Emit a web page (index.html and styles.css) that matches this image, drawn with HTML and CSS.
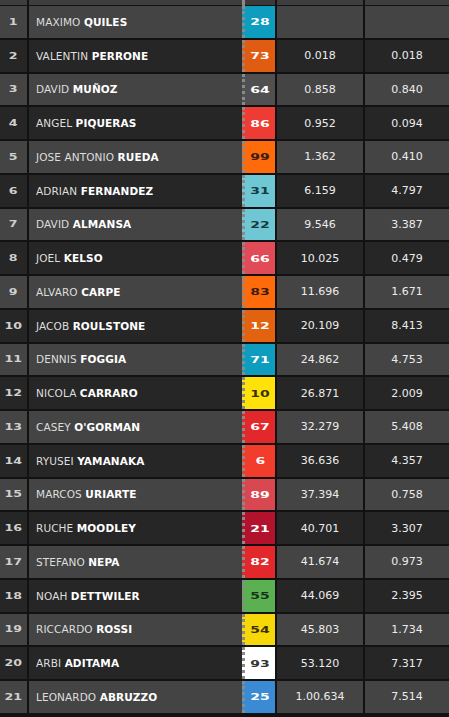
FILE: index.html
```html
<!DOCTYPE html>
<html>
<head>
<meta charset="utf-8">
<link rel="stylesheet" href="styles.css">
</head>
<body>
<div class="table">
  <div class="row stub"><div class="pos"></div><div class="name"></div><div class="num"></div><div class="time"></div><div class="gap"></div></div>
  <div class="row"><div class="pos"><span>1</span></div><div class="name">MAXIMO <b>QUILES</b></div><div class="num c-teal"><span>28</span></div><div class="time"></div><div class="gap"></div></div>
  <div class="row"><div class="pos"><span>2</span></div><div class="name">VALENTIN <b>PERRONE</b></div><div class="num c-orange2"><span>73</span></div><div class="time">0.018</div><div class="gap">0.018</div></div>
  <div class="row"><div class="pos"><span>3</span></div><div class="name">DAVID <b>MUÑOZ</b></div><div class="num c-gray"><span>64</span></div><div class="time">0.858</div><div class="gap">0.840</div></div>
  <div class="row"><div class="pos"><span>4</span></div><div class="name">ANGEL <b>PIQUERAS</b></div><div class="num c-red"><span>86</span></div><div class="time">0.952</div><div class="gap">0.094</div></div>
  <div class="row"><div class="pos"><span>5</span></div><div class="name">JOSE ANTONIO <b>RUEDA</b></div><div class="num c-orange dark"><span>99</span></div><div class="time">1.362</div><div class="gap">0.410</div></div>
  <div class="row"><div class="pos"><span>6</span></div><div class="name">ADRIAN <b>FERNANDEZ</b></div><div class="num c-cyan dark"><span>31</span></div><div class="time">6.159</div><div class="gap">4.797</div></div>
  <div class="row"><div class="pos"><span>7</span></div><div class="name">DAVID <b>ALMANSA</b></div><div class="num c-cyan dark"><span>22</span></div><div class="time">9.546</div><div class="gap">3.387</div></div>
  <div class="row"><div class="pos"><span>8</span></div><div class="name">JOEL <b>KELSO</b></div><div class="num c-pink"><span>66</span></div><div class="time">10.025</div><div class="gap">0.479</div></div>
  <div class="row"><div class="pos"><span>9</span></div><div class="name">ALVARO <b>CARPE</b></div><div class="num c-orange dark"><span>83</span></div><div class="time">11.696</div><div class="gap">1.671</div></div>
  <div class="row"><div class="pos"><span>10</span></div><div class="name">JACOB <b>ROULSTONE</b></div><div class="num c-orange3"><span>12</span></div><div class="time">20.109</div><div class="gap">8.413</div></div>
  <div class="row"><div class="pos"><span>11</span></div><div class="name">DENNIS <b>FOGGIA</b></div><div class="num c-teal"><span>71</span></div><div class="time">24.862</div><div class="gap">4.753</div></div>
  <div class="row"><div class="pos"><span>12</span></div><div class="name">NICOLA <b>CARRARO</b></div><div class="num c-yellow dark"><span>10</span></div><div class="time">26.871</div><div class="gap">2.009</div></div>
  <div class="row"><div class="pos"><span>13</span></div><div class="name">CASEY <b>O'GORMAN</b></div><div class="num c-red2"><span>67</span></div><div class="time">32.279</div><div class="gap">5.408</div></div>
  <div class="row"><div class="pos"><span>14</span></div><div class="name">RYUSEI <b>YAMANAKA</b></div><div class="num c-red3"><span>6</span></div><div class="time">36.636</div><div class="gap">4.357</div></div>
  <div class="row"><div class="pos"><span>15</span></div><div class="name">MARCOS <b>URIARTE</b></div><div class="num c-rose"><span>89</span></div><div class="time">37.394</div><div class="gap">0.758</div></div>
  <div class="row"><div class="pos"><span>16</span></div><div class="name">RUCHE <b>MOODLEY</b></div><div class="num c-crimson"><span>21</span></div><div class="time">40.701</div><div class="gap">3.307</div></div>
  <div class="row"><div class="pos"><span>17</span></div><div class="name">STEFANO <b>NEPA</b></div><div class="num c-red2"><span>82</span></div><div class="time">41.674</div><div class="gap">0.973</div></div>
  <div class="row"><div class="pos"><span>18</span></div><div class="name">NOAH <b>DETTWILER</b></div><div class="num c-green dark"><span>55</span></div><div class="time">44.069</div><div class="gap">2.395</div></div>
  <div class="row"><div class="pos"><span>19</span></div><div class="name">RICCARDO <b>ROSSI</b></div><div class="num c-yellow2 dark"><span>54</span></div><div class="time">45.803</div><div class="gap">1.734</div></div>
  <div class="row"><div class="pos"><span>20</span></div><div class="name">ARBI <b>ADITAMA</b></div><div class="num c-white dark"><span>93</span></div><div class="time">53.120</div><div class="gap">7.317</div></div>
  <div class="row"><div class="pos"><span>21</span></div><div class="name">LEONARDO <b>ABRUZZO</b></div><div class="num c-blue"><span>25</span></div><div class="time">1.00.634</div><div class="gap">7.514</div></div>
</div>
</body>
</html>
```

FILE: styles.css
```css
html, body {
  margin: 0;
  padding: 0;
  background: #121212;
  width: 449px;
  height: 717px;
  overflow: hidden;
}

.table {
  display: flex;
  flex-direction: column;
  font-family: "DejaVu Sans", "Liberation Sans", sans-serif;
}

.row {
  display: flex;
  height: 31.75px;
  border-bottom: 2px solid #121212;
  background: #444444;
}

.row:nth-child(odd) {
  background: #262626;
}

.row.stub {
  height: 5px;
  border-bottom-width: 1.5px;
  background: #3e3e3e;
}

.pos {
  width: 27px;
  flex: none;
  border-right: 2px solid #121212;
  display: flex;
  align-items: center;
  justify-content: center;
  color: #cfcfcf;
  font-size: 9px;
  font-weight: bold;
}

.pos span,
.num span {
  display: inline-block;
  transform: scale(1.4, 0.92);
}

.name {
  width: 213px;
  flex: none;
  display: flex;
  align-items: center;
  padding-left: 7px;
  box-sizing: border-box;
  color: #dedede;
  font-size: 10.5px;
  white-space: pre;
  letter-spacing: 0.1px;
}

.name b {
  color: #ffffff;
  font-weight: bold;
  font-size: 10.5px;
}

.num {
  width: 35px;
  flex: none;
  box-sizing: border-box;
  border-left: 3px dotted #8a8a8a;
  border-right: 2px solid #121212;
  display: flex;
  align-items: center;
  justify-content: center;
  color: #ffffff;
  font-size: 10px;
  font-weight: bold;
}

.stub .num { background: #3a3a3a; }

.num.dark { color: #3a1c10; }
.num.c-cyan.dark { color: #153a42; }
.num.c-green.dark { color: #173317; }
.num.c-yellow.dark, .num.c-yellow2.dark { color: #3b3100; }
.num.c-white.dark { color: #333333; }

.c-teal { background: #0e9cbf; }
.c-orange2 { background: #e05c12; }
.c-gray { background: #505050; }
.c-red { background: #ee3c34; }
.c-orange { background: #ff6a0a; }
.c-orange3 { background: #e2620f; }
.c-cyan { background: #6ec7d3; }
.c-pink { background: #e04b57; }
.c-yellow { background: #ffe20a; }
.c-yellow2 { background: #f6d70a; }
.c-red2 { background: #e2282b; }
.c-red3 { background: #f23c2c; }
.c-rose { background: #d94851; }
.c-crimson { background: #b3122c; }
.c-green { background: #5bb152; }
.c-white { background: #ffffff; }
.c-blue { background: #3a8bd3; }

.time {
  width: 86px;
  flex: none;
  border-right: 2px solid #121212;
  display: flex;
  align-items: center;
  justify-content: center;
  color: #ececec;
  font-size: 11px;
}

.gap {
  flex: 1;
  display: flex;
  align-items: center;
  justify-content: center;
  color: #ececec;
  font-size: 11px;
}
```
